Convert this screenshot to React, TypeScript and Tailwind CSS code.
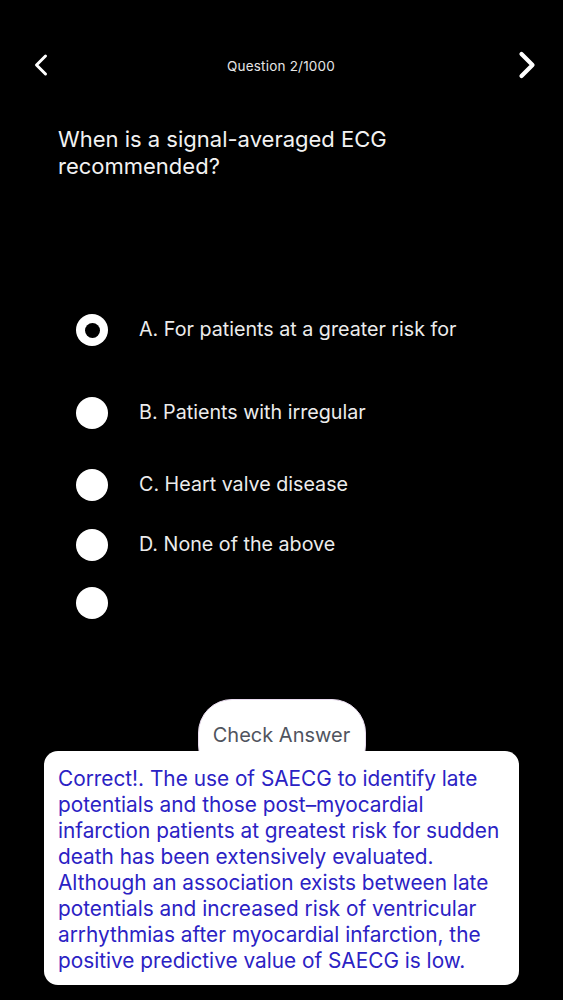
import { ChevronLeft, ChevronRight } from "lucide-react";

const options = [
  { label: "A. For patients at a greater risk for", selected: true, mt: "mt-[134px]" },
  { label: "B. Patients with irregular", selected: false, mt: "mt-[51px]" },
  { label: "C. Heart valve disease", selected: false, mt: "mt-[40px]" },
  { label: "D. None of the above", selected: false, mt: "mt-[28px]" },
  { label: "", selected: false, mt: "mt-[26px]" },
];

const explanation = [
  "Correct!. The use of SAECG to identify late",
  "potentials and those post–myocardial",
  "infarction patients at greatest risk for sudden",
  "death has been extensively evaluated.",
  "Although an association exists between late",
  "potentials and increased risk of ventricular",
  "arrhythmias after myocardial infarction, the",
  "positive predictive value of SAECG is low.",
];

function Radio({ selected }: { selected: boolean }) {
  if (selected) {
    return (
      <div className="w-8 h-8 rounded-full bg-white flex items-center justify-center shrink-0">
        <div className="w-[15px] h-[15px] rounded-full bg-black" />
      </div>
    );
  }
  return <div className="w-8 h-8 rounded-full bg-white shrink-0" />;
}

export default function App() {
  return (
    <div className="w-[563px] h-[1000px] bg-black overflow-hidden font-['Inter',sans-serif] flex flex-col">
      <div className="grid grid-cols-3 items-center pt-[43px] pl-[23px] pr-[14px] h-[87px]">
        <ChevronLeft className="w-[36px] h-[36px] text-white justify-self-start" strokeWidth={2} />
        <div className="text-[13.5px] text-[#e6e6e6] tracking-[0.2px] text-center whitespace-nowrap mr-[10px] mt-[2px]">Question 2/1000</div>
        <ChevronRight className="w-[44px] h-[44px] text-white justify-self-end" strokeWidth={2.3} />
      </div>

      <div className="mt-[39px] pl-[58px] pr-[40px] text-[22px] leading-[27px] text-[#f2f2f2]">
        When is a signal-averaged ECG
        <br />
        recommended?
      </div>

      <div className="flex flex-col">
        {options.map((o, i) => (
          <div key={i} className={`flex items-center pl-[76px] ${o.mt}`}>
            <Radio selected={o.selected} />
            <span className="ml-[31px] text-[19.7px] text-[#ececec]">{o.label}</span>
          </div>
        ))}
      </div>

      <div className="mt-[80px] flex flex-col items-center">
        <div className="w-[168px] h-[80px] rounded-[34px] bg-white border border-[#e9dbef] flex justify-center pt-[22px] text-[20px] leading-[26px] text-[#50545e]">
          Check Answer
        </div>
        <div className="-mt-[28px] w-[475px] bg-white rounded-[14px] px-[14px] pt-[15px] pb-[11px] text-[20.8px] leading-[26px] text-[#2b22c4] relative whitespace-nowrap">
          {explanation.map((line, i) => (
            <div key={i}>{line}</div>
          ))}
        </div>
      </div>
    </div>
  );
}
